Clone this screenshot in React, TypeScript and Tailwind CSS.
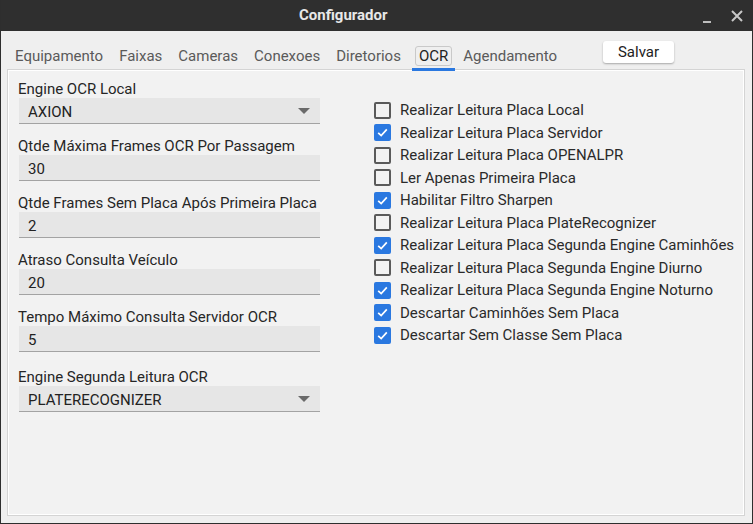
import React from "react";

const font = { fontFamily: "Roboto, 'Noto Sans', sans-serif" };

function Field({ label, value, select, className = "" }: { label: string; value: string; select?: boolean; className?: string }) {
  return (
    <div className={"flex flex-col " + className}>
      <div className="h-[19px] leading-[19px] text-[15px] text-[#262626] pt-[1px]">{label}</div>
      <div className="ml-[1px] h-[26px] w-[301px] bg-[#e6e6e6] border-b border-[#a3a3a3] flex items-center pl-[9px] pr-[9px] pt-[4px] text-[15px] text-[#222]">
        <span className="flex-1">{value}</span>
        {select && (
          <svg width="12" height="6" viewBox="0 0 12 6" className="mr-[1px] mb-[3px]">
            <path d="M0 0 L12 0 L6 6 Z" fill="#6a6a6a" />
          </svg>
        )}
      </div>
    </div>
  );
}

function Check({ label, checked }: { label: string; checked: boolean }) {
  return (
    <div className="h-[22.5px] flex items-center">
      {checked ? (
        <div className="w-[17px] h-[17px] rounded-[2px] bg-[#2a78e0] flex items-center justify-center">
          <svg width="13" height="13" viewBox="0 0 13 13">
            <path d="M2.2 6.8 L5.2 9.6 L10.8 3.4" fill="none" stroke="#ffffff" strokeWidth="1.7" />
          </svg>
        </div>
      ) : (
        <div className="w-[17px] h-[17px] rounded-[2px] border-2 border-[#5a5a5a]" />
      )}
      <span className="ml-[9px] text-[15px] text-[#2a2a2a] leading-[20px]">{label}</span>
    </div>
  );
}

export default function App() {
  const tabs = ["Equipamento", "Faixas", "Cameras", "Conexoes", "Diretorios", "OCR", "Agendamento"];
  const checks: [string, boolean][] = [
    ["Realizar Leitura Placa Local", false],
    ["Realizar Leitura Placa Servidor", true],
    ["Realizar Leitura Placa OPENALPR", false],
    ["Ler Apenas Primeira Placa", false],
    ["Habilitar Filtro Sharpen", true],
    ["Realizar Leitura Placa PlateRecognizer", false],
    ["Realizar Leitura Placa Segunda Engine Caminhões", true],
    ["Realizar Leitura Placa Segunda Engine Diurno", false],
    ["Realizar Leitura Placa Segunda Engine Noturno", true],
    ["Descartar Caminhões Sem Placa", true],
    ["Descartar Sem Classe Sem Placa", true],
  ];
  return (
    <div style={font} className="w-[753px] h-[524px] flex flex-col bg-[#efefef] border-x border-b border-[#2e2e2e] overflow-hidden">
      {/* Title bar */}
      <div className="h-[31px] shrink-0 bg-[#2f2f2f] flex items-center">
        <div className="w-[298px]" />
        <div className="text-[15px] font-bold text-[#e8e8e8]">Configurador</div>
        <div className="flex-1" />
        <svg width="10" height="10" viewBox="0 0 10 10" className="mr-[19px] mt-[6px]">
          <rect x="1" y="7" width="8" height="2" fill="#bdbdbd" />
        </svg>
        <svg width="12" height="12" viewBox="0 0 12 12" className="mr-[9px]">
          <path d="M1 1 L11 11 M11 1 L1 11" stroke="#c8c8c8" strokeWidth="2" />
        </svg>
      </div>

      {/* Tab row */}
      <div className="h-[38px] shrink-0 flex relative z-10">
        <div className="w-[6px]" />
        <div className="w-[596px] flex">
          {tabs.map((t) =>
            t === "OCR" ? (
              <div key={t} className="relative ml-[3px] px-[7px] h-[38px] flex items-center pt-[12px]">
                <span className="text-[15px] text-[#222] border border-[#c9c9c9] rounded-[3px] px-[3px] -mx-[4px] leading-[18px]">{t}</span>
                <div className="absolute left-0 right-0 bottom-[-2px] h-[3px] bg-[#2a78e0]" />
              </div>
            ) : (
              <div key={t} className="relative px-2 h-[38px] flex items-center pt-[12px]">
                <span className="text-[15px] text-[#5a5a5a] leading-[18px]">{t}</span>
              </div>
            )
          )}
        </div>
        <div className="pt-[9px]">
          <button className="w-[71px] h-[22px] bg-white rounded-[3px] shadow-[0_1px_2px_rgba(0,0,0,0.3)] text-[15px] text-[#222] leading-[20px]">
            Salvar
          </button>
        </div>
      </div>

      {/* Panel */}
      <div className="ml-[6px] mr-[7px] h-[447px] border border-[#d4d4d4] shadow-[inset_0_0_0_1px_#ffffff] bg-[#f2f2f2] flex pl-[10px]">
        <div className="flex flex-col pt-[9px] w-[302px]">
          <Field label="Engine OCR Local" value="AXION" select />
          <Field className="mt-[12px]" label="Qtde Máxima Frames OCR Por Passagem" value="30" />
          <Field className="mt-[12px]" label="Qtde Frames Sem Placa Após Primeira Placa" value="2" />
          <Field className="mt-[12px]" label="Atraso Consulta Veículo" value="20" />
          <Field className="mt-[12px]" label="Tempo Máximo Consulta Servidor OCR" value="5" />
          <Field className="mt-[15px]" label="Engine Segunda Leitura OCR" value="PLATERECOGNIZER" select />
        </div>
        <div className="ml-[54px] pt-[29px] flex flex-col">
          {checks.map(([l, c]) => (
            <Check key={l} label={l} checked={c} />
          ))}
        </div>
      </div>
    </div>
  );
}
